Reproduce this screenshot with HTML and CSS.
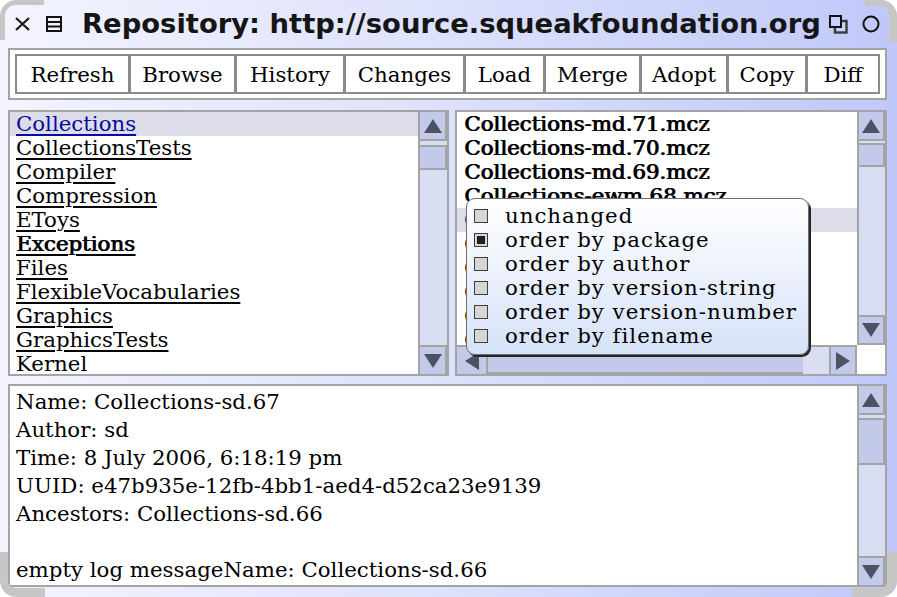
FILE: index.html
```html
<!DOCTYPE html>
<html>
<head>
<meta charset="utf-8">
<title>Repository</title>
<link rel="stylesheet" href="styles.css">
</head>
<body>
<div class="window">
  <div class="titlebar">
    <svg class="ico ico-close" width="17" height="16" viewBox="0 0 17 16"><path d="M2 2L15 14M15 2L2 14"/></svg>
    <svg class="ico ico-collapse" width="16" height="16" viewBox="0 0 16 16"><rect x="1" y="1" width="14" height="14"/><path d="M1 6H15M1 10.5H15"/></svg>
    <div class="title">Repository: http://source.squeakfoundation.org/squeak</div>
    <svg class="ico ico-restore" width="19" height="19" viewBox="0 0 19 19"><rect class="back" x="6" y="6" width="11.5" height="11.5"/><rect class="front" x="1" y="1" width="11" height="11"/></svg>
    <svg class="ico ico-expand" width="18" height="18" viewBox="0 0 18 18"><circle cx="9" cy="9" r="7.5"/></svg>
  </div>

  <div class="toolbar">
    <div class="btn b-refresh">Refresh</div>
    <div class="btn b-browse">Browse</div>
    <div class="btn b-history">History</div>
    <div class="btn b-changes">Changes</div>
    <div class="btn b-load">Load</div>
    <div class="btn b-merge">Merge</div>
    <div class="btn b-adopt">Adopt</div>
    <div class="btn b-copy">Copy</div>
    <div class="btn b-diff">Diff</div>
  </div>

  <div class="lists">
    <div class="pane pane-packages">
      <ul class="list pkg-list">
        <li class="row u sel">Collections</li>
        <li class="row u">CollectionsTests</li>
        <li class="row u">Compiler</li>
        <li class="row u">Compression</li>
        <li class="row u">EToys</li>
        <li class="row u bold">Exceptions</li>
        <li class="row u">Files</li>
        <li class="row u">FlexibleVocabularies</li>
        <li class="row u">Graphics</li>
        <li class="row u">GraphicsTests</li>
        <li class="row">Kernel</li>
      </ul>
      <div class="vscroll">
        <div class="sb-btn up"><svg class="arr" width="18" height="14" viewBox="0 0 18 14"><path d="M9 0L18 14H0Z"/></svg></div>
        <div class="sb-thumb thumb-pkg"></div>
        <div class="sb-btn down"><svg class="arr" width="18" height="14" viewBox="0 0 18 14"><path d="M0 0H18L9 14Z"/></svg></div>
      </div>
    </div>

    <div class="pane pane-versions">
      <ul class="list ver-list">
        <li class="row bold">Collections-md.71.mcz</li>
        <li class="row bold">Collections-md.70.mcz</li>
        <li class="row bold">Collections-md.69.mcz</li>
        <li class="row bold">Collections-ewm.68.mcz</li>
        <li class="row sel">Collections-sd.67.mcz</li>
        <li class="row">Collections-sd.66.mcz</li>
        <li class="row">Collections-md.65.mcz</li>
        <li class="row">Collections-md.64.mcz</li>
        <li class="row">Collections-md.63.mcz</li>
        <li class="row">Collections-md.62.mcz</li>
      </ul>
      <div class="vscroll narrow boxed">
        <div class="sb-btn up"><svg class="arr" width="18" height="14" viewBox="0 0 18 14"><path d="M9 0L18 14H0Z"/></svg></div>
        <div class="sb-thumb thumb-ver"></div>
        <div class="sb-btn down"><svg class="arr" width="18" height="14" viewBox="0 0 18 14"><path d="M0 0H18L9 14Z"/></svg></div>
      </div>
      <div class="hscroll">
        <div class="hs-btn left"><svg class="arr" width="14" height="18" viewBox="0 0 14 18"><path d="M0 9L14 0V18Z"/></svg></div>
        <div class="hs-thumb"></div>
        <div class="hs-track"></div>
        <div class="hs-btn right"><svg class="arr" width="14" height="18" viewBox="0 0 14 18"><path d="M14 9L0 0V18Z"/></svg></div>
      </div>
      <div class="corner-cell"></div>

      <div class="popup">
        <div class="mi"><span class="cb"></span>unchanged</div>
        <div class="mi"><span class="cb on"></span>order by package</div>
        <div class="mi"><span class="cb"></span>order by author</div>
        <div class="mi"><span class="cb"></span>order by version-string</div>
        <div class="mi"><span class="cb"></span>order by version-number</div>
        <div class="mi"><span class="cb"></span>order by filename</div>
      </div>
    </div>
  </div>

  <div class="pane pane-detail">
    <div class="detail-text">Name: Collections-sd.67
Author: sd
Time: 8 July 2006, 6:18:19 pm
UUID: e47b935e-12fb-4bb1-aed4-d52ca23e9139
Ancestors: Collections-sd.66

empty log messageName: Collections-sd.66</div>
    <div class="vscroll narrow">
      <div class="sb-btn up"><svg class="arr" width="18" height="14" viewBox="0 0 18 14"><path d="M9 0L18 14H0Z"/></svg></div>
      <div class="sb-thumb thumb-detail"></div>
      <div class="sb-btn down"><svg class="arr" width="18" height="14" viewBox="0 0 18 14"><path d="M0 0H18L9 14Z"/></svg></div>
    </div>
  </div>

  <div class="grip tl"></div>
  <div class="grip tr"></div>
  <div class="grip bl"></div>
  <div class="grip br"></div>
</div>
</body>
</html>
```

FILE: styles.css
```css
* { box-sizing: border-box; }

html, body {
  margin: 0;
  padding: 0;
  background: #ffffff;
}

body {
  width: 897px;
  height: 597px;
  overflow: hidden;
  font-family: "DejaVu Serif", serif;
}

.window {
  position: relative;
  width: 897px;
  height: 597px;
  padding: 0 10px 0 8px;
  display: flex;
  flex-direction: column;
  background: linear-gradient(90deg, #f3f4fe 0%, #dfe3fc 45%, #bfc8f9 100%);
  border-radius: 16px;
  overflow: hidden;
}

/* ---------- title bar ---------- */
.titlebar {
  height: 39px;
  padding: 9px 7px 0 6px;
  display: flex;
  align-items: center;
  flex: none;
}

.ico { flex: none; display: block; }
.ico-close path { stroke: #1c1c1c; stroke-width: 2.3; fill: none; }
.ico-collapse { margin-left: 15px; }
.ico-collapse rect { fill: none; stroke: #111; stroke-width: 2; }
.ico-collapse path { stroke: #111; stroke-width: 2; }
.ico-restore rect.back { fill: #c9d0f9; stroke: #3a3a3a; stroke-width: 2.4; }
.ico-restore rect.front { fill: #c9d0f9; stroke: #111; stroke-width: 2; }
.ico-expand { margin-left: 14px; }
.ico-expand circle { fill: none; stroke: #111; stroke-width: 2; }

.title {
  flex: 1;
  min-width: 0;
  margin: 0 10px 0 20px;
  overflow: hidden;
  white-space: nowrap;
  font-family: "DejaVu Sans", sans-serif;
  font-weight: bold;
  font-size: 27.4px;
  line-height: 30px;
  color: #151515;
}

/* ---------- toolbar ---------- */
.toolbar {
  flex: none;
  margin-top: 9px;
  height: 52px;
  padding: 4px 5px;
  border: 2px solid #a3a3a3;
  background: #ffffff;
  display: flex;
}

.btn {
  flex: none;
  height: 40px;
  border: 2px solid #8a8a8a;
  background: #ffffff;
  display: flex;
  align-items: center;
  justify-content: center;
  font-size: 21.3px;
  color: #000;
  white-space: nowrap;
}
.btn + .btn { margin-left: -1px; }
.b-refresh { width: 115px; }
.b-browse { width: 107px; }
.b-history { width: 110px; }
.b-changes { width: 121px; }
.b-load { width: 81px; }
.b-merge { width: 97px; }
.b-adopt { width: 88px; }
.b-copy { width: 80px; }
.b-diff { width: 74px; }

/* ---------- panes ---------- */
.lists {
  flex: none;
  margin-top: 10px;
  height: 266px;
  display: flex;
  gap: 6px;
}

.pane {
  border: 2px solid #a4a4a6;
  background: #ffffff;
}

.pane-packages {
  width: 441px;
  flex: none;
  display: flex;
}

.pane-versions {
  flex: 1;
  position: relative;
  display: grid;
  grid-template-columns: 1fr 28px;
  grid-template-rows: 1fr 29px;
}

.pane-detail {
  flex: none;
  margin-top: 8px;
  height: 203px;
  display: flex;
}

/* ---------- lists ---------- */
.list {
  margin: 0;
  padding: 0;
  list-style: none;
  overflow: hidden;
  min-width: 0;
}
.pkg-list { flex: 1; }

.row {
  height: 24px;
  line-height: 24px;
  padding-left: 6px;
  white-space: nowrap;
  font-size: 21.3px;
  color: #000;
}
.ver-list .row { padding-left: 7px; }

.row.u {
  text-decoration: underline;
  text-decoration-thickness: 2px;
  text-underline-offset: 3px;
}
.row.sel {
  background: #dcdde9;
  color: #0a0aa0;
}
.bold { text-shadow: 1px 0 0 currentColor; }

/* ---------- scrollbars ---------- */
.vscroll {
  flex: none;
  width: 29px;
  border-left: 2px solid #a4a4a6;
  background: #d9ddf1;
  display: flex;
  flex-direction: column;
}
.vscroll.narrow { width: 28px; }

.sb-btn {
  flex: none;
  height: 29px;
  background: #c3c9e8;
  border-right: 2px solid #a4a4a6;
  display: flex;
  align-items: center;
  justify-content: center;
}
.sb-btn.up { border-bottom: 2px solid #a4a4a6; }
.sb-btn.down { margin-top: auto; border-top: 2px solid #a4a4a6; }
.boxed .sb-btn.down { border-bottom: 2px solid #a4a4a6; height: 30px; }

.sb-thumb {
  flex: none;
  background: #c3c9e8;
  border: 2px solid #a4a4a6;
  border-left: 0;
}
.thumb-pkg { margin-top: 4px; height: 25px; }
.thumb-ver { margin-top: 2px; height: 24px; }
.thumb-detail { margin-top: 3px; height: 47px; }

.arr { display: block; fill: #4b5363; }

.hscroll {
  border-top: 2px solid #a4a4a6;
  background: #d9ddf1;
  display: flex;
}
.hs-btn {
  flex: none;
  background: #c3c9e8;
  display: flex;
  align-items: center;
  justify-content: center;
}
.hs-btn.left { width: 31px; border-right: 2px solid #a4a4a6; }
.hs-btn.right { width: 28px; border-left: 2px solid #a4a4a6; border-right: 2px solid #a4a4a6; }
.hs-thumb {
  flex: none;
  width: 315px;
  background: #c3c9e8;
  border-bottom: 2px solid #a4a4a6;
}
.hs-track { flex: 1; }
.corner-cell { background: #ffffff; }

/* ---------- detail text ---------- */
.detail-text {
  flex: 1;
  min-width: 0;
  padding: 2px 6px;
  white-space: pre;
  overflow: hidden;
  font-size: 21.3px;
  line-height: 28px;
  color: #000;
}

/* ---------- popup menu ---------- */
.popup {
  position: absolute;
  left: 9px;
  top: 86px;
  width: 343px;
  height: 157px;
  padding: 5px 0 0 7px;
  border: 1px solid #6e6e6e;
  border-radius: 9px;
  box-shadow: 2px 2px 0 #262626;
  background: linear-gradient(180deg, #ffffff 0%, #d6e2f9 100%);
  z-index: 2;
}
.mi {
  height: 24px;
  line-height: 24px;
  display: flex;
  align-items: center;
  font-size: 21.3px;
  letter-spacing: 1px;
  color: #000;
  white-space: nowrap;
}
.cb {
  flex: none;
  width: 14px;
  height: 14px;
  margin-right: 17px;
  border: 1px solid #3e3e3e;
  background: #d6d6d6;
}
.cb.on {
  background: #1e1e1e;
  box-shadow: inset 0 0 0 2px #d6d6d6;
}

/* ---------- window corner grips ---------- */
.grip {
  position: absolute;
  border: 0 solid #c6c6c6;
  pointer-events: none;
}
.grip.tl {
  top: 0; left: 0;
  width: 44px; height: 40px;
  border-top-width: 5px;
  border-left-width: 5px;
  border-top-left-radius: 16px;
}
.grip.tr {
  top: 0; right: 0;
  width: 32px; height: 42px;
  border-top-width: 6px;
  border-right-width: 8px;
  border-top-right-radius: 16px;
}
.grip.bl {
  bottom: 0; left: 0;
  width: 45px; height: 45px;
  border-left-width: 8px;
  border-bottom-width: 9px;
  border-bottom-left-radius: 16px;
}
.grip.br {
  bottom: 0; right: 0;
  width: 45px; height: 45px;
  border-right-width: 10px;
  border-bottom-width: 9px;
  border-bottom-right-radius: 16px;
}
```
